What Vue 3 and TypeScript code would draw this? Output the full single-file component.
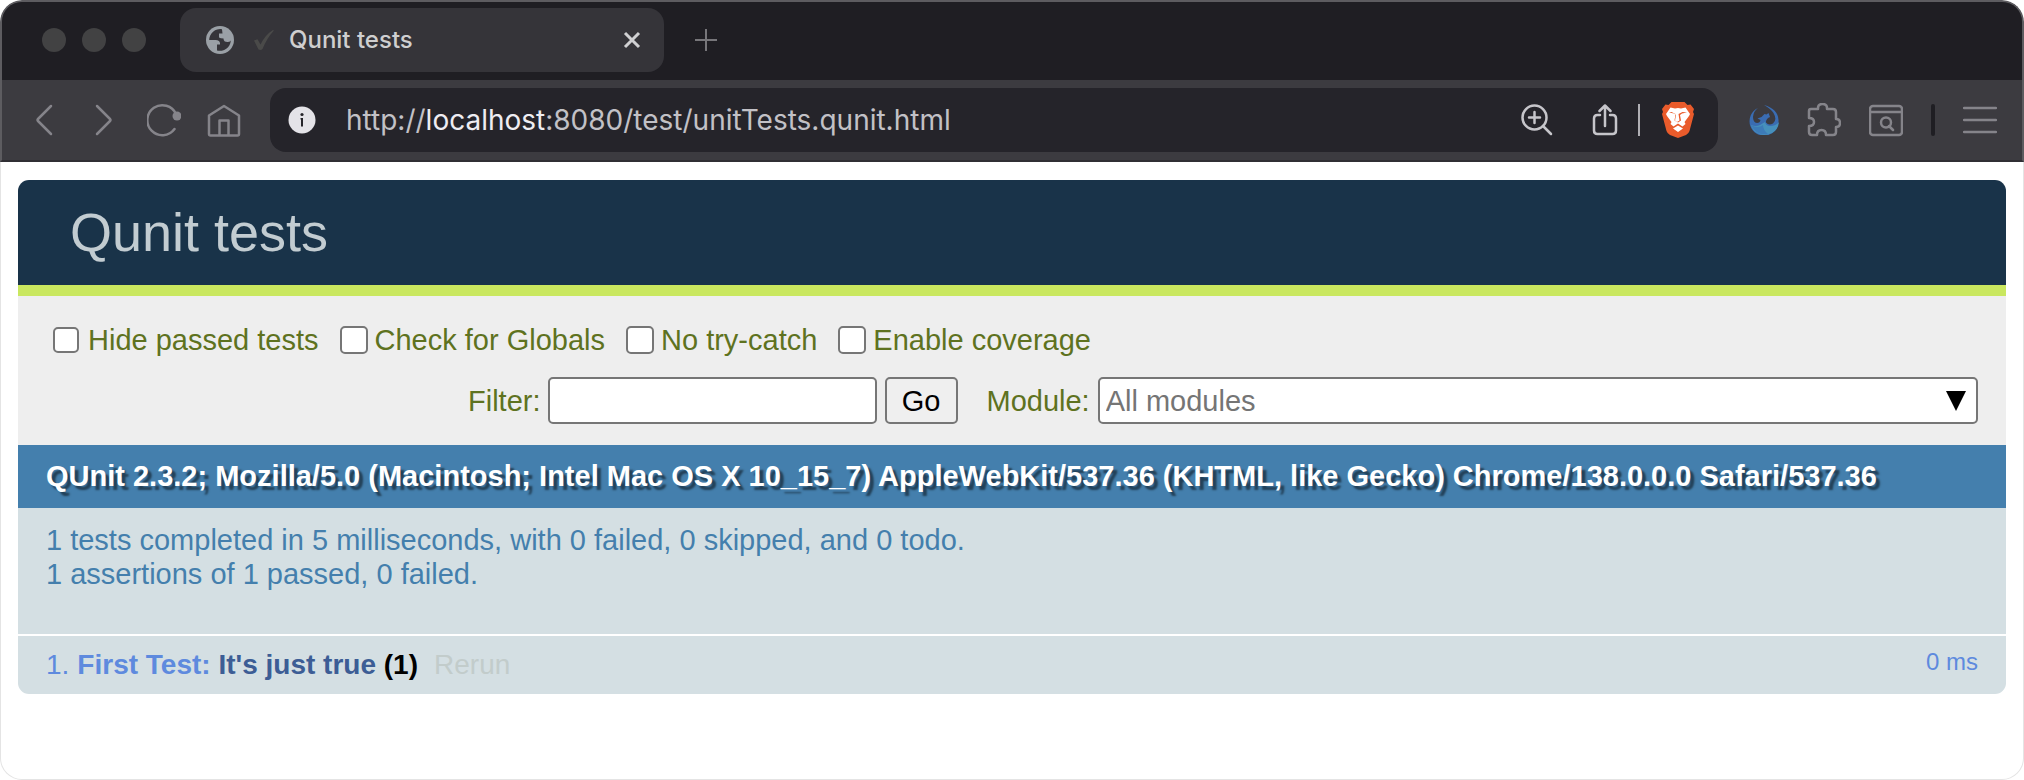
<script setup lang="ts">
import { ref } from 'vue'

interface Option {
  id: string
  label: string
  checked: boolean
}

const options = ref<Option[]>([
  { id: 'hidepassed', label: 'Hide passed tests', checked: false },
  { id: 'noglobals', label: 'Check for Globals', checked: false },
  { id: 'notrycatch', label: 'No try-catch', checked: false },
  { id: 'coverage', label: 'Enable coverage', checked: false },
])
const filter = ref('')
const moduleName = ref('All modules')
</script>

<template>
  <div class="window">
    <header class="chrome">
      <div class="tabstrip">
        <div class="lights"><i></i><i></i><i></i></div>
        <div class="tab">
          <svg class="globe" viewBox="0 0 28 28" width="28" height="28">
            <circle cx="14" cy="14" r="14" fill="#9aa0a6" />
            <path d="M16 3.200A11 11 0 0 0 3.200 14H9.500q4.500 0 4.500 3.500v1h-3v6A11 11 0 0 0 24.800 14.500q-1 1.500-3.300 1.500-4 0-4-3.500-3 0-4.500-1V7.500h3.500Z" fill="#353439" />
          </svg>
          <svg class="check" viewBox="0 0 22 22" width="22" height="22">
            <path d="M1 11.500l3.500-1.300 3 5.300Q12 6 20 1q1-.3.500 1Q14 9 9.500 20q-1.500 1.500-4 .5Z" fill="#4a4a49" />
          </svg>
          <span class="tab-title">Qunit tests</span>
          <button class="plain" aria-label="Close tab">
            <svg viewBox="0 0 18 18" width="18" height="18"><path d="M2 2l14 14M16 2L2 16" stroke="#d0d0d2" stroke-width="3" fill="none" /></svg>
          </button>
        </div>
        <button class="plain new-tab" aria-label="New tab">
          <svg viewBox="0 0 22 22" width="22" height="22"><path d="M11 0v22M0 11h22" stroke="#77767a" stroke-width="2" /></svg>
        </button>
      </div>

      <div class="toolbar">
        <nav class="nav">
          <button class="plain" aria-label="Back">
            <svg viewBox="0 0 34 34" width="34" height="34"><path d="M24 3L11 16q-1 1 0 2L24 31" /></svg>
          </button>
          <button class="plain" aria-label="Forward">
            <svg viewBox="0 0 34 34" width="34" height="34"><path d="M10 3l13 13q1 1 0 2L10 31" /></svg>
          </button>
          <button class="plain" aria-label="Reload">
            <svg viewBox="0 0 34 34" width="34" height="34"><path d="M27.500 26A15 15 0 1 1 29 11" /><circle cx="30" cy="13" r="4.500" class="solid" /></svg>
          </button>
          <button class="plain" aria-label="Home">
            <svg viewBox="0 0 34 34" width="34" height="34"><path d="M2 12.500L17 3l15 9.500V31q0 1.500-1.500 1.500h-27Q2 32.500 2 31ZM12.500 32V17.500h9V32" /></svg>
          </button>
        </nav>

        <div class="address">
          <svg class="info" viewBox="0 0 28 28" width="28" height="28">
            <circle cx="14" cy="14" r="13.500" fill="#e4e3e8" />
            <circle cx="14" cy="8.500" r="1.600" fill="#25242a" />
            <path d="M12.500 12h2.500v8.500h-2v-7h-.5Z" fill="#25242a" />
          </svg>
          <div class="url">http://<b>localhost</b>:8080/test/unitTests.qunit.html</div>
          <div class="address-actions">
            <button class="plain" aria-label="Zoom">
              <svg viewBox="0 0 32 32" width="32" height="32"><path d="M13.500 8v11M8 13.500h11M22 22l8 8" /><circle cx="13.500" cy="13.500" r="12" /></svg>
            </button>
            <button class="plain share" aria-label="Share">
              <svg viewBox="0 0 26 32" width="26" height="32"><path d="M13 22V2M7.500 7L13 1.500 18.500 7M8 11H5.500Q2 11 2 14.500v12Q2 30 5.500 30h15q3.500 0 3.500-3.500v-12Q24 11 20.500 11H18" /></svg>
            </button>
            <span class="bar"></span>
            <button class="plain brave" aria-label="Brave Shields">
              <svg viewBox="0 0 32 36" width="32" height="36">
                <path d="M9.500 0h13l3 3 3-.500L32 7l-1 3 1 2-4.500 17Q27 31 24 33l-8 3-8-3q-3-2-3.500-4L0 12l1-2-1-3 3.500-4.500 3 .5Z" fill="#e95b2b" class="solid-fill" />
                <path d="M8.500 5.500L13 6.500 16 6l3 .500 4.500-1L28 12l-1 2-4.500 6 1 2-3 2.500L16 21.500 11.500 24.500l-3-2.500 1-2L5 14l-1-2ZM16 23.500l5 3-5 3.500-5-3.500Z" fill="#fff" class="solid-fill" />
                <path d="M7 10.500l5 1 2 1.500L13 18.500l3 2 3-2-1-5.500 2-1.500 5-1-4.500-.500-4 2 1 6.500-2.500 1.500-2.500-1.500 1-6.500-4-2Z" fill="#e95b2b" class="solid-fill" />
              </svg>
            </button>
          </div>
        </div>

        <div class="extensions">
          <button class="plain" aria-label="Extension">
            <svg viewBox="0 0 30 30" width="30" height="30">
              <path d="M9 3A14.500 14.500 0 1 0 29.500 15Q29 4 15 0q7 4 9.500 8 4 7-.5 10.500-4.500 2.500-7-1-.500-2 2-4.500l2-1-1.500-4-2 1.500-2-.500-3 3-4 1.500 3 1.500q-.500 3-3.500 3Q4 17.500 4 12 4.500 6 9 3Z" fill="#3a6cb2" class="solid-fill" />
              <path d="M2 20q5 2 9 0l5-3q1 4 5 4 6 0 9-4-1 8-7 11-8 4-15 0-5-3-6-8Z" fill="#4690bc" class="solid-fill" />
              <path d="M2 20q7 4 12 0 0 5 5 9-12 2-17-9Z" fill="#3d7bb8" class="solid-fill" />
            </svg>
          </button>
          <button class="plain" aria-label="Extensions">
            <svg viewBox="0 0 34 34" width="34" height="34"><path d="M4 6h7V5q0-4 4.500-4T20 5v1h6q3 0 3 3v7q4 0 4 4t-4 4v5q0 3-3 3h-7q0-5-4.500-5T10 32H5q-3 0-3-3v-6q5 0 5-4t-5-4V8q0-2 2-2Z" /></svg>
          </button>
          <button class="plain" aria-label="Search page">
            <svg viewBox="0 0 34 34" width="34" height="34"><rect x="1" y="3" width="32" height="29" rx="3" /><path d="M1 9h32M20 23l4 4" /><circle cx="17" cy="19.500" r="5" /></svg>
          </button>
          <span class="bar dark"></span>
          <button class="plain" aria-label="Menu">
            <svg viewBox="0 0 34 34" width="34" height="34"><path d="M1 5h32M1 17h32M1 29h32" /></svg>
          </button>
        </div>
      </div>
    </header>

    <main class="qunit">
      <h1>Qunit tests</h1>
      <form class="controls" @submit.prevent>
        <div class="options">
          <label v-for="o in options" :key="o.id" :for="o.id">
            <input :id="o.id" v-model="o.checked" type="checkbox" />{{ o.label }}
          </label>
        </div>
        <div class="filters">
          <label for="filter">Filter:</label>
          <input id="filter" v-model="filter" class="filter" type="text" />
          <button class="go" type="submit">Go</button>
          <label for="module" class="module-label">Module:</label>
          <div class="select-wrap">
            <select id="module" v-model="moduleName">
              <option>All modules</option>
            </select>
            <svg class="arrow" viewBox="0 0 20 20" width="20" height="20"><path d="M0 0h20L10 20Z" /></svg>
          </div>
        </div>
      </form>
      <h2>QUnit 2.3.2; Mozilla/5.0 (Macintosh; Intel Mac OS X 10_15_7) AppleWebKit/537.36 (KHTML, like Gecko) Chrome/138.0.0.0 Safari/537.36</h2>
      <p class="result">
        1 tests completed in 5 milliseconds, with 0 failed, 0 skipped, and 0 todo.<br />
        1 assertions of 1 passed, 0 failed.
      </p>
      <div class="test">
        <span>1.</span>
        <strong><span class="module-name">First Test:</span> <span class="test-name">It's just true</span> <span class="counts">(1)</span></strong>
        <a href="#rerun">Rerun</a>
        <span class="runtime">0 ms</span>
      </div>
    </main>
  </div>
</template>

<style>
html,
body {
  margin: 0;
  background: #fff;
}
</style>

<style scoped>
.window {
  box-sizing: border-box;
  min-height: 100vh;
  border-radius: 22px;
  overflow: hidden;
  background: #fff;
  box-shadow: inset 0 0 0 1px #e4e4e4;
  font-family: "Liberation Sans", Arial, sans-serif;
  font-size: 29px;
}
.chrome {
  box-sizing: border-box;
  border: 2px solid #5d5c60;
  border-bottom: 2px solid #302f34;
  border-radius: 22px 22px 0 0;
  background: #3c3b40;
  overflow: hidden;
}
.plain {
  display: flex;
  padding: 0;
  border: 0;
  background: none;
}
.tabstrip {
  box-sizing: border-box;
  display: flex;
  align-items: center;
  height: 78px;
  padding: 0 0 2px 40px;
  background: #1f1e23;
}
.lights {
  display: flex;
  gap: 16px;
  width: 138px;
}
.lights i {
  width: 24px;
  height: 24px;
  border-radius: 50%;
  background: #424243;
}
.tab {
  box-sizing: border-box;
  display: flex;
  align-items: center;
  width: 484px;
  height: 64px;
  padding: 0 23px 0 26px;
  border-radius: 16px;
  background: #353439;
}
.check {
  margin: 0 14px 0 19px;
}
.tab-title {
  flex: 1;
  font: 500 24px/32px Inter, sans-serif;
  color: #cfcfd0;
}
.new-tab {
  margin-left: 31px;
}
.toolbar {
  display: flex;
  align-items: center;
  height: 80px;
}
.nav {
  display: flex;
  gap: 26px;
  padding: 0 29px 0 25px;
}
.toolbar svg {
  fill: none;
  stroke: #85848a;
  stroke-width: 2.5;
  stroke-linecap: round;
  stroke-linejoin: round;
}
.toolbar .solid {
  fill: #85848a;
  stroke: none;
}
.toolbar .info,
.toolbar .solid-fill {
  stroke: none;
}
.address {
  display: flex;
  flex: 1;
  align-items: center;
  height: 64px;
  padding: 0 24px 0 18px;
  border-radius: 16px;
  background: #25242a;
}
.url {
  flex: 1;
  margin-left: 30px;
  font: 400 28px/36px Inter, sans-serif;
  color: #c2c1c6;
}
.url b {
  font-weight: 400;
  color: #eeedf2;
}
.address-actions {
  display: flex;
  align-items: center;
}
.toolbar .address-actions svg {
  stroke: #c6c5ca;
}
.share {
  margin: 0 20px 0 39px;
}
.bar {
  width: 2px;
  height: 32px;
  background: #b0afb4;
}
.brave {
  margin-left: 22px;
}
.extensions {
  display: flex;
  align-items: center;
  gap: 28px;
  padding: 0 25px 0 31px;
}
.bar.dark {
  width: 4px;
  border-radius: 2px;
  background: #1f1e23;
}
.qunit {
  margin: 18px;
}
h1 {
  margin: 0;
  padding: 22px 52px;
  border-bottom: 11px solid #c9e75f;
  border-radius: 11px 11px 0 0;
  background: #193349;
  color: #c2ccd1;
  font-weight: 400;
  font-size: 54px;
  line-height: 61px;
}
.controls {
  padding: 28px 28px 21px 35px;
  background: #eee;
  color: #5e7220;
  line-height: 32px;
}
.options {
  display: flex;
  gap: 21px;
}
.options label {
  display: flex;
  align-items: center;
}
.options input {
  appearance: none;
  box-sizing: border-box;
  width: 28px;
  height: 28px;
  margin: 0 7px 0 0;
  border: 2px solid #767676;
  border-radius: 5px;
  background: #fff;
}
.options label:first-child input {
  width: 26px;
  height: 26px;
  margin-right: 9px;
}
.filters {
  display: flex;
  align-items: center;
  margin-top: 21px;
  padding-left: 415px;
}
.filter,
.go,
select {
  box-sizing: border-box;
  height: 47px;
  border: 2px solid #767676;
  border-radius: 5px;
  background: #fff;
  font: inherit;
}
.filter {
  width: 329px;
  margin: 0 8px 0 7px;
}
.go {
  width: 73px;
  padding: 0;
  background: #efefef;
  color: #000;
}
.module-label {
  margin: 0 8px 0 29px;
}
.select-wrap {
  position: relative;
  flex: 1;
}
select {
  appearance: none;
  display: block;
  width: 100%;
  padding: 0 6px;
  color: #757575;
}
.arrow {
  position: absolute;
  top: 14px;
  right: 12px;
  pointer-events: none;
}
h2 {
  margin: 0;
  padding: 14px 28px 15px;
  background: #447fad;
  color: #fff;
  font-size: 29px;
  line-height: 34px;
  text-shadow: rgba(0, 0, 0, 0.5) 4px 4px 2px;
}
.result {
  margin: 0;
  padding: 15px 28px 43px;
  border-bottom: 2px solid #fff;
  background: #d4dfe3;
  color: #447fad;
  line-height: 34px;
}
.test {
  display: flex;
  gap: 8px;
  padding: 12px 28px;
  border-radius: 0 0 11px 11px;
  background: #d4dfe3;
  color: #5e8ade;
  font-size: 28px;
  line-height: 34px;
}
.test-name {
  color: #3c5d95;
}
.counts {
  color: #000;
}
.test a {
  margin-left: 8px;
  color: #c2cccb;
  text-decoration: none;
}
.runtime {
  margin-left: auto;
  font-size: 24px;
  line-height: 28px;
}
</style>
